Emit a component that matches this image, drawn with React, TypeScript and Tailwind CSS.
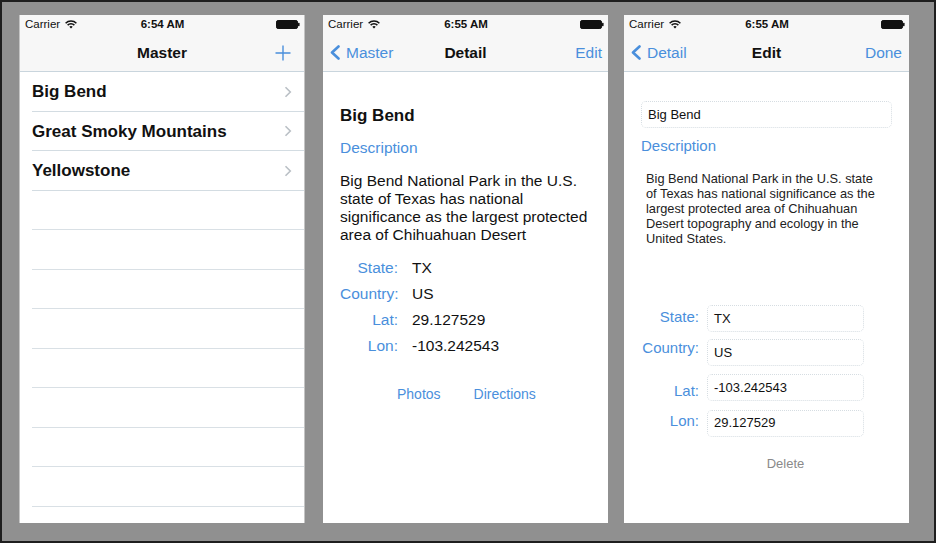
import React from "react";

const BLUE = "text-[#4a8fdc]";

function Wifi() {
  return (
    <svg width="12" height="9" viewBox="0 0 12 9" className="ml-[5px]">
      <path d="M0.6 3.2 A7.6 7.6 0 0 1 11.4 3.2" stroke="#111" strokeWidth="1.5" fill="none" />
      <path d="M2.6 5.1 A4.8 4.8 0 0 1 9.4 5.1" stroke="#111" strokeWidth="1.5" fill="none" />
      <path d="M6 8.6 L4.3 6.8 A2.4 2.4 0 0 1 7.7 6.8 Z" fill="#111" />
    </svg>
  );
}

function Battery() {
  return (
    <svg width="24" height="9" viewBox="0 0 24 9">
      <rect x="0.5" y="0.5" width="21" height="8" rx="1.6" fill="#111" stroke="#111" />
      <rect x="22" y="2.8" width="1.6" height="3.4" rx="0.6" fill="#111" />
    </svg>
  );
}

function BackChevron() {
  return (
    <svg width="12" height="15" viewBox="0 0 12 15" className="mr-[5px]">
      <path d="M9.5 1.5 L3 7.5 L9.5 13.5" stroke="#4a8fdc" strokeWidth="2.6" fill="none" strokeLinecap="round" strokeLinejoin="round" />
    </svg>
  );
}

function NavBar({
  time,
  title,
  left,
  right,
}: {
  time: string;
  title: string;
  left?: React.ReactNode;
  right?: React.ReactNode;
}) {
  return (
    <div className="bg-[#f7f7f7] border-b border-[#c9d5dd]">
      <div className="h-[19px] grid grid-cols-3 items-center pl-[5px] pr-[4px] text-[11.5px] text-[#111]">
        <div className="flex items-center">
          <span>Carrier</span>
          <Wifi />
        </div>
        <div className="text-center font-bold">{time}</div>
        <div className="flex justify-end">
          <Battery />
        </div>
      </div>
      <div className="h-[37px] relative flex items-center justify-between">
        <div className="flex items-center pl-[6px]">{left}</div>
        <div className="absolute inset-0 flex items-center justify-center text-[15.5px] font-bold text-[#111]">
          {title}
        </div>
        <div className="flex items-center">{right}</div>
      </div>
    </div>
  );
}

function MasterPanel() {
  const names = ["Big Bend", "Great Smoky Mountains", "Yellowstone"];
  const empties = Array.from({ length: 8 });
  return (
    <div className="w-[286px] h-[508px] bg-white border-x border-[#c4c4c4] overflow-hidden">
      <NavBar
        time="6:54 AM"
        title="Master"
        right={
          <svg width="16" height="16" viewBox="0 0 16 16" className="mr-[13px]">
            <path d="M8 0.5 V15.5 M0.5 8 H15.5" stroke="#4a8fdc" strokeWidth="1.4" />
          </svg>
        }
      />
      <div>
        {names.map((n) => (
          <div key={n} className="ml-[12px] h-[39.5px] border-b border-[#d3dce2] flex items-center justify-between pr-[12px] pt-[1px]">
            <span className="text-[17px] font-bold text-[#111]">{n}</span>
            <svg width="8" height="12" viewBox="0 0 8 12">
              <path d="M1.5 1.2 L6.3 6 L1.5 10.8" stroke="#b9bfc5" strokeWidth="1.6" fill="none" />
            </svg>
          </div>
        ))}
        {empties.map((_, i) => (
          <div key={i} className="ml-[12px] h-[39.5px] border-b border-[#d9e0e5]" />
        ))}
      </div>
    </div>
  );
}

function DetailPanel() {
  const rows: [string, string][] = [
    ["State:", "TX"],
    ["Country:", "US"],
    ["Lat:", "29.127529"],
    ["Lon:", "-103.242543"],
  ];
  return (
    <div className="ml-[18px] w-[285px] h-[508px] bg-white overflow-hidden">
      <NavBar
        time="6:55 AM"
        title="Detail"
        left={
          <>
            <BackChevron />
            <span className={`text-[15.5px] ${BLUE}`}>Master</span>
          </>
        }
        right={<span className={`text-[15.5px] ${BLUE} pr-[6px]`}>Edit</span>}
      />
      <div className="pl-[17px] pt-[34px]">
        <div className="h-[20px] leading-[20px] text-[17px] font-bold text-[#111]">Big Bend</div>
        <div className={`mt-[13px] h-[18px] leading-[18px] text-[15.5px] ${BLUE}`}>Description</div>
        <p className="mt-[15px] text-[15.5px] leading-[18px] text-[#111]">
          Big Bend National Park in the U.S.
          <br />
          state of Texas has national
          <br />
          significance as the largest protected
          <br />
          area of Chihuahuan Desert
        </p>
        <div className="mt-[11px]">
          {rows.map(([l, v]) => (
            <div key={l} className="h-[26px] flex items-center text-[15.5px]">
              <span className={`w-[58px] text-right ${BLUE}`}>{l}</span>
              <span className="ml-[14px] text-[#111]">{v}</span>
            </div>
          ))}
        </div>
        <div className={`mt-[26px] flex text-[14px] leading-[18px] ${BLUE}`}>
          <span className="ml-[57px]">Photos</span>
          <span className="ml-[33px]">Directions</span>
        </div>
      </div>
    </div>
  );
}

function EditPanel() {
  const rows: [string, string, string][] = [
    ["State:", "TX", "-mt-[3px]"],
    ["Country:", "US", "-mt-[9px]"],
    ["Lat:", "-103.242543", "mt-[7px]"],
    ["Lon:", "29.127529", "-mt-[3px]"],
  ];
  return (
    <div className="ml-[16px] w-[285px] h-[508px] bg-white overflow-hidden">
      <NavBar
        time="6:55 AM"
        title="Edit"
        left={
          <>
            <BackChevron />
            <span className={`text-[15.5px] ${BLUE}`}>Detail</span>
          </>
        }
        right={<span className={`text-[15.5px] ${BLUE} pr-[7px]`}>Done</span>}
      />
      <div className="pl-[17px] pt-[29px]">
        <div className="w-[251px] h-[27px] border border-dotted border-[#d6dde2] rounded-[5px] flex items-center pl-[6px] text-[13px] text-[#111]">
          Big Bend
        </div>
        <div className={`mt-[9px] h-[18px] leading-[18px] text-[15px] ${BLUE}`}>Description</div>
        <p className="mt-[16px] ml-[5px] text-[12.8px] leading-[15px] text-[#222]">
          Big Bend National Park in the U.S. state
          <br />
          of Texas has national significance as the
          <br />
          largest protected area of Chihuahuan
          <br />
          Desert topography and ecology in the
          <br />
          United States.
        </p>
        <div className="mt-[59px] flex flex-col gap-[7px]">
          {rows.map(([l, v, off]) => (
            <div key={l} className="flex items-center">
              <span className={`w-[58px] text-right text-[15px] ${BLUE} ${off}`}>{l}</span>
              <div className="ml-[8px] w-[157px] h-[27px] border border-dotted border-[#d6dde2] rounded-[5px] flex items-center pl-[6px] text-[13px] text-[#111]">
                {v}
              </div>
            </div>
          ))}
        </div>
        <div className="mt-[19px] flex">
          <div className="w-[66px]" />
          <div className="w-[157px] text-center text-[13px] leading-[16px] text-[#8a8a8a]">Delete</div>
        </div>
      </div>
    </div>
  );
}

export default function App() {
  return (
    <div className="w-[936px] h-[543px] bg-[#909090] border-2 border-[#1e1e1e] flex items-start pt-[13px] pl-[17px] font-['Liberation_Sans',Arial,sans-serif]">
      <MasterPanel />
      <DetailPanel />
      <EditPanel />
    </div>
  );
}
